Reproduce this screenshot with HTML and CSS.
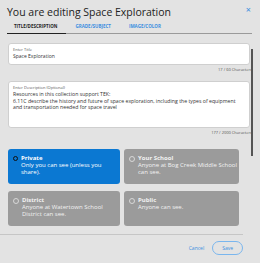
FILE: index.html
```html
<!DOCTYPE html>
<html lang="en">
<head>
    <meta charset="UTF-8">
    <title>Edit Collection</title>
    <link rel="stylesheet" href="styles.css">
</head>
<body>
    <div class="modal">
        <div class="head">
            <h1>You are editing Space Exploration</h1>
            <span class="close">&times;</span>
        </div>

        <div class="tabs">
            <span class="tab active">Title/Description</span>
            <span class="tab">Grade/Subject</span>
            <span class="tab">Image/Color</span>
        </div>

        <div class="content">
            <div class="fields">
                <div class="field">
                    <label>Enter Title</label>
                    <div class="value">Space Exploration</div>
                </div>
                <div class="count">17 / 60 Characters</div>

                <div class="field desc">
                    <label>Enter Description (Optional)</label>
                    <div class="value">Resources in this collection support TEK:<br>6.11C describe the history and future of space exploration, including the types of equipment and transportation needed for space travel</div>
                </div>
                <div class="count">177 / 2000 Characters</div>

                <div class="options">
                    <div class="option selected">
                        <span class="radio"></span>
                        <div><b>Private</b><br>Only you can see (unless you share).</div>
                    </div>
                    <div class="option">
                        <span class="radio"></span>
                        <div><b>Your School</b><br>Anyone at Bog Creek Middle School can see.</div>
                    </div>
                    <div class="option">
                        <span class="radio"></span>
                        <div><b>District</b><br>Anyone at Watertown School District can see.</div>
                    </div>
                    <div class="option">
                        <span class="radio"></span>
                        <div><b>Public</b><br>Anyone can see.</div>
                    </div>
                </div>
            </div>
            <div class="thumb"></div>
        </div>

        <div class="foot">
            <span class="cancel">Cancel</span>
            <span class="save">Save</span>
        </div>
    </div>
</body>
</html>
```

FILE: styles.css
```css
body {
    margin: 0;
    background-color: #e3e3e3;
    font-family: "Open Sans", sans-serif;
    color: #333;
}
.modal {
    width: 260px;
    height: 263px;
    overflow: hidden;
}
.head {
    display: flex;
    justify-content: space-between;
    align-items: flex-start;
    padding: 5px 9px 0 7px;
}
.head h1 {
    margin: 0;
    font-size: 10.5px;
    font-weight: normal;
    line-height: 15px;
    color: #222;
}
.close {
    color: #3a8ee0;
    font-size: 9px;
    line-height: 10px;
}
.tabs {
    display: flex;
    margin: 0 8px 0 7px;
    border-bottom: 1px solid #9a9a9a;
}
.tab {
    font-size: 4.5px;
    font-weight: bold;
    text-transform: uppercase;
    color: #3a8ee0;
    padding: 3px 9px 4px 7px;
    margin-right: 2px;
}
.tab.active {
    color: #222;
    border-bottom: 1px solid #222;
    margin-bottom: -1px;
}
.content {
    position: relative;
    padding: 9px 10px 0 8px;
    height: 191px;
}
.field {
    background: #fff;
    border: 1px solid #cfcfcf;
    border-radius: 3px;
    padding: 3px 4px 4px;
}
.field label {
    display: block;
    font-size: 4px;
    line-height: 6px;
    color: #555;
}
.field .value {
    font-size: 5px;
    line-height: 7px;
    color: #333;
}
.field.desc {
    height: 38px;
    padding-right: 8px;
}
.field.desc .value {
    font-size: 5.2px;
    line-height: 6.5px;
}
.count {
    text-align: right;
    font-size: 4px;
    line-height: 6px;
    color: #555;
    margin: 2px -2px 8px 0;
}
.options {
    display: grid;
    grid-template-columns: 112px 115px;
    gap: 7px 4px;
    margin-top: 13px;
}
.option {
    display: flex;
    gap: 3px;
    background: #9b9b9b;
    border-radius: 3px;
    height: 35px;
    box-sizing: border-box;
    padding: 6px 1px 6px 5px;
    font-size: 6px;
    line-height: 7px;
    color: #f2f2f2;
}
.option.selected {
    background: #0b78d2;
    color: #fff;
}
.radio {
    flex: none;
    width: 4px;
    height: 4px;
    margin-top: 1px;
    border: 1px solid #d8d8d8;
    border-radius: 50%;
}
.option.selected .radio {
    border: 1.5px solid #111;
    width: 3px;
    height: 3px;
}
.thumb {
    position: absolute;
    right: 7px;
    top: 15px;
    width: 2px;
    height: 107px;
    background: #555;
}
.foot {
    display: flex;
    justify-content: flex-end;
    align-items: center;
    gap: 8px;
    margin: 0 17px 0 0;
    border-top: 1px solid #c6c6c6;
    padding-top: 6px;
}
.cancel {
    font-size: 5px;
    color: #3a8ee0;
}
.save {
    font-size: 5px;
    color: #3a8ee0;
    border: 1px solid #7ab6ee;
    border-radius: 7px;
    padding: 3px 9px;
}
```
